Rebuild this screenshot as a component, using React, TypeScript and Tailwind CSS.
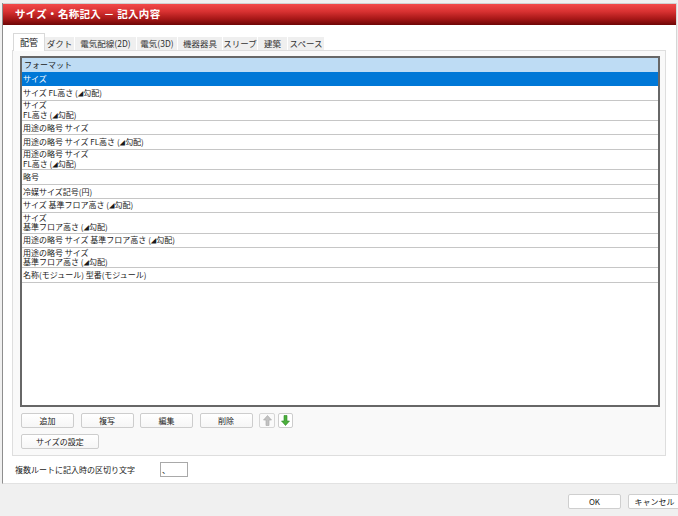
import React from 'react';

const TABS = ['配管', 'ダクト', '電気配線(2D)', '電気(3D)', '機器器具', 'スリーブ', '建築', 'スペース'];
const TAB_W = [32, 30, 62, 41, 45, 35, 30, 37];

// each row: one or two lines of the format
const ROWS: string[][] = [
  ['サイズ'],
  ['サイズ FL高さ (◢勾配)'],
  ['サイズ', 'FL高さ (◢勾配)'],
  ['用途の略号 サイズ'],
  ['用途の略号 サイズ FL高さ (◢勾配)'],
  ['用途の略号 サイズ', 'FL高さ (◢勾配)'],
  ['略号'],
  ['冷媒サイズ記号(円)'],
  ['サイズ 基準フロア高さ (◢勾配)'],
  ['サイズ', '基準フロア高さ (◢勾配)'],
  ['用途の略号 サイズ 基準フロア高さ (◢勾配)'],
  ['用途の略号 サイズ', '基準フロア高さ (◢勾配)'],
  ['名称(モジュール) 型番(モジュール)'],
];

// shrink the slope triangle so it reads like the small glyph of the original
const Line = ({ text }: { text: string }) => {
  const parts = text.split('◢');
  return (
    <span className="whitespace-pre">
      {parts[0]}
      {parts.length > 1 && (
        <>
          <span className="text-[5.5px] align-[0.5px]">◢</span>
          {parts[1]}
        </>
      )}
    </span>
  );
};

const Btn = ({ label, w = 'w-[53px]' }: { label: string; w?: string }) => (
  <button
    className={`${w} h-[15px] flex items-center justify-center rounded-[2px] border border-[#cdcdcd] bg-gradient-to-b from-white to-[#f6f6f6] text-[8px] leading-none text-[#1a1a1a]`}
  >
    {label}
  </button>
);

const Arrow = ({ down }: { down?: boolean }) => (
  <svg width="9" height="11" viewBox="0 0 9 11" className={down ? 'rotate-180' : ''}>
    <polygon
      points="4.5,0.5 8.5,5 6,5 6,10.5 3,10.5 3,5 0.5,5"
      fill={down ? '#4caf3c' : '#c2c2c2'}
      stroke={down ? '#2e8a26' : '#a6a6a6'}
      strokeWidth="0.6"
    />
  </svg>
);

export default function App() {
  return (
    <div
      className="w-[678px] h-[516px] bg-[#f0f0f0] overflow-hidden pt-[3px] text-[#1a1a1a]"
      style={{ fontFamily: '"Noto Sans CJK JP", "Noto Sans", sans-serif' }}
    >
      <div className="ml-[2px] w-[675px] border-l border-r border-b border-l-[#8e8e8e] border-r-[#d6d6d6] border-b-[#e2e2e2] bg-white">
        {/* title bar */}
        <div className="h-[22px] border-t border-[#d0d0d0] bg-[linear-gradient(to_bottom,#f24a4a_0%,#d93232_35%,#a81818_70%,#6e0606_100%)] flex items-center pl-[12px]">
          <span className="text-white font-bold text-[10.5px] leading-none tracking-[0.3px]">
            サイズ・名称記入 － 記入内容
          </span>
        </div>

        {/* body */}
        <div className="h-[458px] pt-[8px] pl-[9px]">
          {/* tabs */}
          <div className="flex items-end h-[17px] pl-[1px]">
            {TABS.map((t, i) =>
              i === 0 ? (
                <div
                  key={t}
                  className="relative z-10 -mb-px h-[18px] flex items-center justify-center bg-white border border-b-0 border-[#d9d9d9] text-[9px] leading-none"
                  style={{ width: TAB_W[i] }}
                >
                  {t}
                </div>
              ) : (
                <div
                  key={t}
                  className="h-[13px] flex items-center justify-center bg-[#efefef] border-r border-white text-[8.5px] leading-none text-[#333]"
                  style={{ width: TAB_W[i] }}
                >
                  {t}
                </div>
              )
            )}
          </div>

          {/* tab page */}
          <div className="w-[654px] h-[406px] border border-[#dedede] bg-[#f9f9f9] pl-[7px] pt-[5px]">
            <div className="w-[640px] h-[351px] border-2 border-[#676767] bg-white flex flex-col">
              <div className="h-[14px] shrink-0 bg-[#bedcf4] flex items-center pl-[2px] text-[8px] leading-none">
                フォーマット
              </div>
              {ROWS.map((r, i) => (
                <div
                  key={i}
                  className={`shrink-0 border-b border-[#c6c6c6] flex flex-col justify-center pl-[1px] text-[8px] leading-[9.4px] ${
                    r.length > 1 ? 'h-[20.3px]' : 'h-[14.4px]'
                  } ${i === 0 ? 'bg-[#0078d7] text-white border-b-[#0078d7]' : ''}`}
                >
                  {r.map((l, j) => (
                    <Line key={j} text={l} />
                  ))}
                </div>
              ))}
            </div>

            <div className="mt-[6px] ml-[1px] flex items-center gap-[6.5px]">
              <Btn label="追加" />
              <Btn label="複写" />
              <Btn label="編集" />
              <Btn label="削除" />
              <div className="flex gap-[3px]">
                <button className="w-[16px] h-[15px] flex items-center justify-center rounded-[2px] border border-[#d6d6d6] bg-[#fafafa]">
                  <Arrow />
                </button>
                <button className="w-[15px] h-[15px] flex items-center justify-center rounded-[2px] border border-[#cdcdcd] bg-white">
                  <Arrow down />
                </button>
              </div>
            </div>
            <div className="mt-[6px] ml-[1px] flex">
              <Btn label="サイズの設定" w="w-[78px]" />
            </div>
          </div>

          {/* separator setting */}
          <div className="mt-[6px] flex items-center">
            <span className="w-[148px] pl-[3px] text-[8px] leading-none">複数ルートに記入時の区切り文字</span>
            <div className="w-[28px] h-[15px] border border-[#a9a9a9] bg-white flex items-center pl-[1px] text-[8px] leading-none">
              、
            </div>
          </div>
        </div>
      </div>

      {/* dialog buttons */}
      <div className="flex pl-[568px] pt-[10px] gap-[7px]">
        <button className="w-[53px] h-[15px] shrink-0 flex items-center justify-center rounded-[2px] border border-[#cfcfcf] bg-white text-[8px] leading-none">
          OK
        </button>
        <button className="w-[53px] h-[15px] shrink-0 flex items-center justify-center rounded-[2px] border border-[#cfcfcf] bg-white text-[8px] leading-none">
          キャンセル
        </button>
      </div>
    </div>
  );
}
